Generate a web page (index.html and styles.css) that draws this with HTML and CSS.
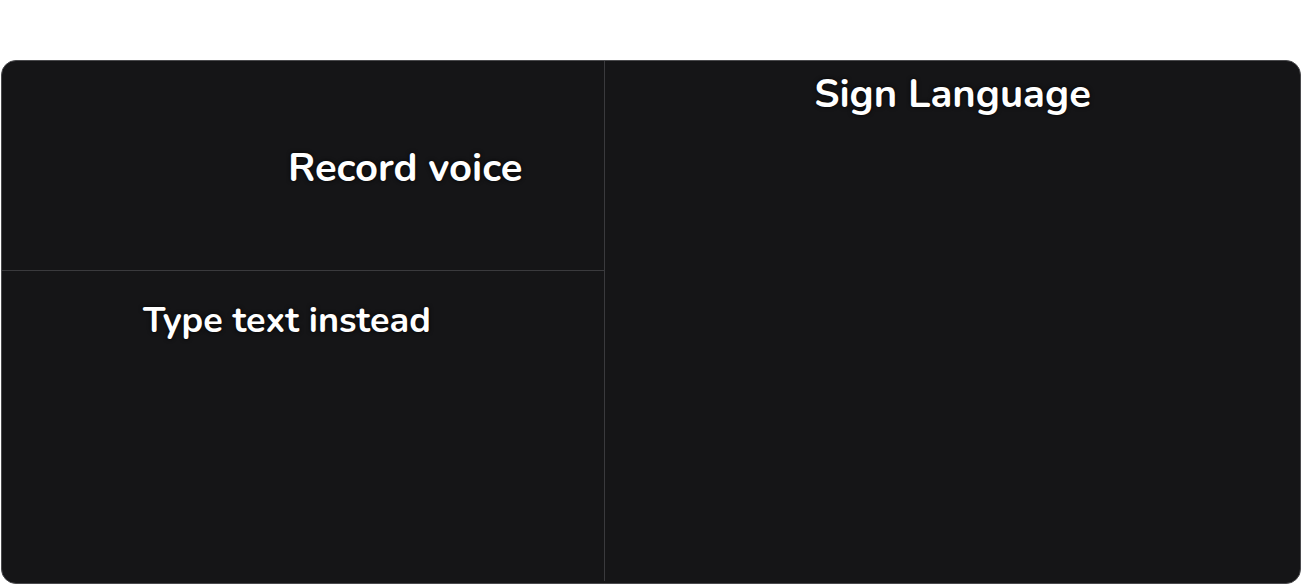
FILE: index.html
```html
<!DOCTYPE html>
<html>
<head>
<meta charset="utf-8">
<link rel="stylesheet" href="styles.css">
</head>
<body>
<div class="card">
  <div class="left">
    <div class="record"><span class="record-label">Record voice</span></div>
    <div class="type"><span class="type-label">Type text instead</span></div>
  </div>
  <div class="right">
    <h2 class="sign-label">Sign Language</h2>
  </div>
</div>
</body>
</html>
```

FILE: styles.css
```css
html, body {
  margin: 0;
  padding: 0;
  background: #ffffff;
}
body {
  padding: 60px 0 0 1px;
  font-family: "Nunito", Lato, "Noto Sans", sans-serif;
  color: #ffffff;
}
.card {
  box-sizing: border-box;
  width: 1300px;
  height: 524px;
  background: #151517;
  border: 1px solid #4a4a4d;
  border-radius: 15px;
  display: grid;
  grid-template-columns: 603px 1fr;
  overflow: hidden;
}
.left {
  display: flex;
  flex-direction: column;
  border-right: 1px solid #3a3a3d;
  margin-bottom: 2px;
}
.record {
  height: 210px;
  border-bottom: 1px solid #3a3a3d;
  display: flex;
  align-items: center;
  padding-left: 286px;
  padding-top: 5px;
  box-sizing: border-box;
}
.record-label {
  font-size: 40px;
  font-weight: 700;
  text-shadow: 0 0 4px rgba(0,0,0,0.9);
}
.type {
  padding: 25px 0 0 141px;
}
.type-label {
  font-size: 36px;
  font-weight: 700;
  text-shadow: 0 0 4px rgba(0,0,0,0.9);
}
.right {
  display: flex;
  justify-content: center;
}
.sign-label {
  margin: 6px 0 0 0;
  font-size: 40px;
  font-weight: 700;
  text-shadow: 0 0 4px rgba(0,0,0,0.9);
}
```
